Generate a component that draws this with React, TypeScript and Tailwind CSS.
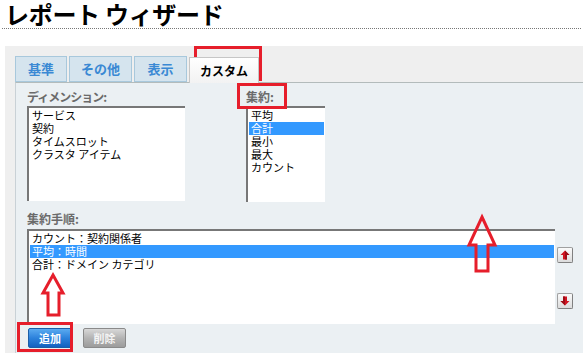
import React from 'react';

const dimensions = ['サービス', '契約', 'タイムスロット', 'クラスタ アイテム'];
const aggregates = ['平均', '合計', '最小', '最大', 'カウント'];
const steps = ['カウント：契約関係者', '平均：時間', '合計：ドメイン カテゴリ'];

const ArrowIcon = ({ down = false }: { down?: boolean }) => (
  <svg width="10" height="10" viewBox="0 0 10 10" className={down ? 'rotate-180' : ''}>
    <polygon points="5,0.5 9.5,5 7,5 7,9.5 3,9.5 3,5 0.5,5" fill="#d0121f" />
    <polygon points="5,0.5 9.5,5 7,5 7,9.5 5,9.5" fill="#9c0c16" />
  </svg>
);

const ListBox = ({ items, selected, className }: { items: string[]; selected: number; className: string }) => (
  <div className={`bg-white border-t-2 border-l-2 border-[#777777] p-[1px] ${className}`}>
    {items.map((item, i) => (
      <div
        key={item}
        className={`pl-[2px] text-[11px] leading-[13px] whitespace-nowrap ${
          i === selected ? 'bg-[#3399ff] text-white' : 'text-black'
        }`}
      >
        {item}
      </div>
    ))}
  </div>
);

const Tab = ({ label, active = false, width }: { label: string; active?: boolean; width: string }) =>
  active ? (
    <div
      className={`${width} h-[26px] relative top-[1px] z-10 flex items-center justify-center bg-gradient-to-b from-white to-[#f2f2f2] border border-b-0 border-[#c6c6c6] text-[12px] font-bold text-black`}
    >
      {label}
    </div>
  ) : (
    <div
      className={`${width} h-[26px] flex items-center justify-center bg-[#d5e4ee] border border-[#a8c8dc] text-[13px] font-bold text-[#3a89d4]`}
    >
      {label}
    </div>
  );

export default function App() {
  return (
    <div className="relative w-[583px] h-[353px] overflow-hidden bg-white flex flex-col font-['Noto_Sans_CJK_JP',sans-serif]">
      {/* title */}
      <div className="h-[29px] mx-[2px] pl-[3px] border-b border-dotted border-[#777777]">
        <h1 className="text-[24px] leading-[28px] font-bold text-black tracking-[-0.3px]">レポート ウィザード</h1>
      </div>

      {/* wizard body */}
      <div className="mt-[17px] ml-[5px] flex-1 flex flex-col bg-[#efefef]">
        <div className="h-[36px] pl-[10px] flex items-end gap-[2px]">
          <Tab label="基準" width="w-[52px]" />
          <Tab label="その他" width="w-[63px]" />
          <Tab label="表示" width="w-[53px]" />
          <Tab label="カスタム" width="w-[70px]" active />
        </div>

        <div className="flex-1 ml-[10px] bg-[#ebf0f3] border-t border-l border-t-[#b3bbbb] border-l-[#c9d1d6] pl-[11px] pt-[7px]">
          <div className="flex">
            <div className="w-[158px]">
              <div className="text-[12px] leading-[14px] font-bold text-[#6a6a6a] tracking-[-1px]">ディメンション:</div>
              <ListBox items={dimensions} selected={-1} className="mt-[2px] h-[95px]" />
            </div>
            <div className="ml-[61px] w-[79px]">
              <div className="text-[12px] leading-[14px] font-bold text-[#6a6a6a]">集約:</div>
              <ListBox items={aggregates} selected={1} className="mt-[2px] h-[96px]" />
            </div>
          </div>

          <div className="mt-[10px] text-[12px] leading-[14px] font-bold text-[#6a6a6a]">集約手順:</div>
          <div className="mt-[3px] flex">
            <ListBox items={steps} selected={1} className="w-[528px] h-[95px]" />
            <div className="ml-[2px] flex flex-col">
              <button className="mt-[18px] w-[16px] h-[16px] flex items-center justify-center rounded-[2px] border border-[#a0a0a0] border-b-[#808080] border-r-[#808080] bg-gradient-to-b from-[#fafafa] to-[#dcdcdc]">
                <ArrowIcon />
              </button>
              <button className="mt-[30px] w-[16px] h-[16px] flex items-center justify-center rounded-[2px] border border-[#a0a0a0] border-b-[#808080] border-r-[#808080] bg-gradient-to-b from-[#fafafa] to-[#dcdcdc]">
                <ArrowIcon down />
              </button>
            </div>
          </div>

          <div className="mt-[4px] ml-[1px] flex gap-[11px]">
            <button className="w-[44px] h-[20px] rounded-[2px] border border-[#1b5ea8] bg-gradient-to-b from-[#5aaaf0] via-[#2c82dc] to-[#1461c0] text-white text-[11px] font-bold leading-none">
              追加
            </button>
            <button className="w-[43px] h-[20px] rounded-[2px] border border-[#8a8a8a] bg-gradient-to-b from-[#d8d8d8] via-[#b4b4b4] to-[#9c9c9c] text-[#f4f4f4] text-[11px] font-bold leading-none">
              削除
            </button>
          </div>
        </div>
      </div>

      {/* annotations */}
      <div className="absolute left-[194px] top-[46px] w-[68px] h-[35px] border-[3px] border-[#e61e2b]" />
      <div className="absolute left-[237px] top-[83px] w-[50px] h-[26px] border-[3px] border-[#e61e2b]" />
      <div className="absolute left-[17px] top-[322px] w-[56px] h-[30px] border-[3px] border-[#e61e2b]" />
      <svg className="absolute left-0 top-0 pointer-events-none" width="583" height="353">
        <polygon
          points="53,275 63,293 59,293 59,315 48,315 48,293 43,293"
          fill="none"
          stroke="#e61e2b"
          strokeWidth="3"
          strokeLinejoin="miter"
        />
        <polygon
          points="482,217 495,245 488,245 488,271 476,271 476,245 469,245"
          fill="none"
          stroke="#e61e2b"
          strokeWidth="3"
          strokeLinejoin="miter"
        />
      </svg>
    </div>
  );
}
